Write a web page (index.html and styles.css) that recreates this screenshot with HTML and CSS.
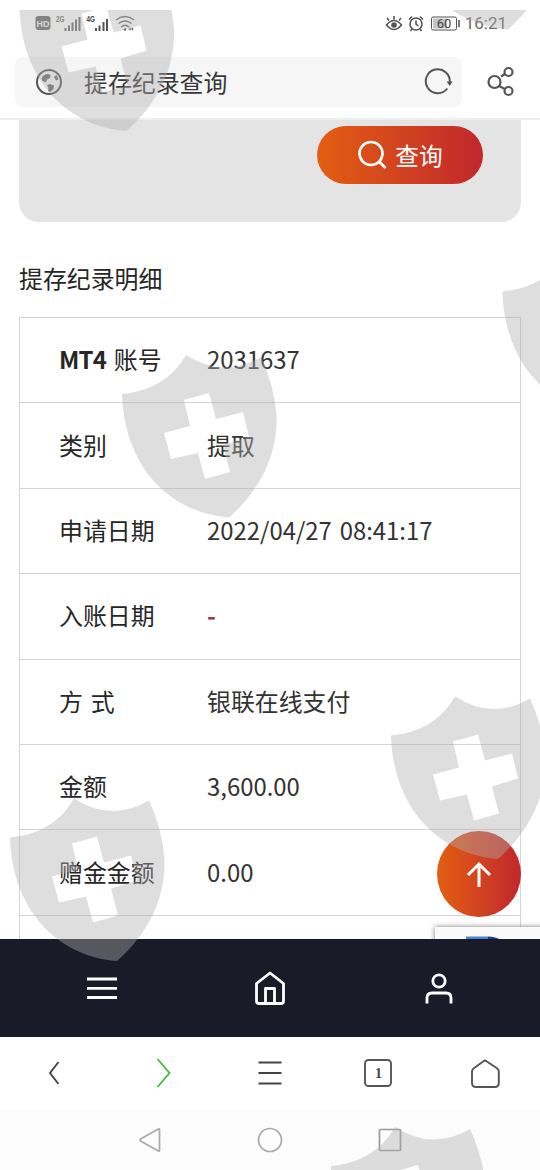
FILE: index.html
```html
<!DOCTYPE html>
<html lang="zh-CN">
<head>
<meta charset="utf-8">
<title>提存纪录查询</title>
<link rel="stylesheet" href="styles.css">
</head>
<body>
<div class="phone">
  <header class="top">
    <div class="status">
      <div class="status-left">
        <svg width="106" height="24" viewBox="0 0 106 24">
          <rect x="1.500" y="5" width="15" height="14" rx="3" fill="#666"/>
          <text x="9" y="15.500" class="hd" text-anchor="middle">HD</text>
          <text x="22" y="11" class="net" textLength="8.500" lengthAdjust="spacingAndGlyphs">2G</text>
          <g fill="#666"><rect x="30.500" y="17" width="2" height="3"/><rect x="34" y="14.500" width="2" height="5.500"/><rect x="37.500" y="11.500" width="2" height="8.500"/><rect x="41" y="8.500" width="2" height="11.500"/><rect x="44.500" y="6" width="2" height="14"/></g>
          <text x="52.500" y="11" class="net strong" textLength="8.500" lengthAdjust="spacingAndGlyphs">4G</text>
          <g fill="#555"><rect x="61" y="17" width="2" height="3"/><rect x="64.500" y="14.500" width="2" height="5.500"/><rect x="68.500" y="11" width="2" height="9"/><rect x="72" y="8" width="2" height="12"/></g>
          <g fill="none" stroke="#666" stroke-width="1.500"><path d="M82 9q9-7 18 0M84.500 12.500q6.500-5 13 0M87 16q4-3.500 8 0"/></g>
          <circle cx="91" cy="18.500" r="1.300" fill="#666"/><path d="M94.500 18h5M96 16.500v3M98.500 16.500v3" stroke="#777"/>
        </svg>
      </div>
      <div class="status-right">
        <svg width="80" height="24" viewBox="0 0 80 24">
          <g fill="none" stroke="#555" stroke-width="1.600">
            <path d="M1.500 14q7.500-9 15 0q-7.500 9-15 0ZM9 8.500V5M4 9.500L2 7M14 9.500l2-2.500"/>
            <circle cx="31" cy="13" r="6"/><path d="M31 9.500V13l2.500 2M24 8.500l3-3M35 5.500l3 3M27 18l-1.500 2M35 18l1.500 2"/>
            <rect x="46.500" y="6" width="25" height="13" rx="1.500" stroke-width="1"/><path d="M74 9v7"/>
          </g>
          <rect x="48" y="7.500" width="14" height="10" fill="#c4c4c4"/><circle cx="9" cy="14" r="2.800" fill="#555"/>
          <text x="59" y="17" class="battery" text-anchor="middle">60</text>
        </svg>
        <span>16:21</span>
      </div>
    </div>
    <div class="address-row">
      <div class="address">
        <svg width="28" height="28" viewBox="0 0 28 28"><circle cx="14" cy="14" r="12" fill="none" stroke="#555" stroke-width="2"/><path d="M6.500 10.500q2-4.500 6.500-4.500l2.500 1-.5 3-3 1.500-1 3-3.500-1.500ZM12 17l3-1 4 1.500-.5 3.500-3.500 3-2-1 .5-3ZM19 9l2.500-2 2 4.500-2.500 1Z" fill="#666"/></svg>
        <span class="address-text">提存纪录查询</span>
        <svg width="30" height="28" viewBox="0 0 30 28"><path d="M23.300 20.500A12 12 0 1 1 25.700 14.500" fill="none" stroke="#555" stroke-width="2"/><path d="M22.500 13.500h6l-2.700 4.500Z" fill="#555"/></svg>
      </div>
      <svg class="share" width="30" height="32" viewBox="0 0 30 32"><g fill="none" stroke="#555" stroke-width="2.200"><circle cx="8.500" cy="16" r="6"/><circle cx="22.500" cy="6" r="4"/><circle cx="22.500" cy="25" r="4"/><path d="M15 10.500l4-2.500M13 20l6 3"/></g></svg>
    </div>
  </header>

  <main class="content">
    <section class="search-card">
      <button class="query"><svg width="30" height="30" viewBox="0 0 30 30"><g fill="none" stroke="#fff" stroke-width="2.600"><circle cx="14" cy="13.500" r="11.500"/><path d="M22.500 22l6 6"/></g></svg><span>查询</span></button>
    </section>
    <h1 class="title">提存纪录明细</h1>
    <dl class="records">
      <div class="row"><dt><b>MT4</b> 账号</dt><dd>2031637</dd></div>
      <div class="row"><dt>类别</dt><dd>提取</dd></div>
      <div class="row"><dt>申请日期</dt><dd>2022/04/27 08:41:17</dd></div>
      <div class="row"><dt>入账日期</dt><dd class="empty">-</dd></div>
      <div class="row"><dt>方 式</dt><dd>银联在线支付</dd></div>
      <div class="row"><dt>金额</dt><dd>3,600.00</dd></div>
      <div class="row"><dt>赠金金额</dt><dd>0.00</dd></div>
      <div class="row"></div>
    </dl>
    <div class="to-top"><svg width="28" height="28" viewBox="0 0 28 28"><path d="M14 27V4M3 15L14 4l11 11" fill="none" stroke="#fff" stroke-width="3"/></svg></div>
    <div class="captcha"><svg width="40" height="4" viewBox="0 0 40 4"><path d="M2 4V1.500H24V4Z" fill="#4a80d8"/><path d="M24 1.500Q31 1.500 35 4H24Z" fill="#1c3a99"/></svg></div>
  </main>

  <nav class="site-nav">
    <svg width="34" height="36" viewBox="0 0 34 36"><path d="M2 9h30M2 18.300h30M2 27.500h30" stroke="#fff" stroke-width="2.800"/></svg>
    <svg width="34" height="36" viewBox="0 0 34 36"><g fill="none" stroke="#fff" stroke-width="2.800" stroke-linejoin="round"><path d="M3.500 13.500L17 3 30.500 13.500V31q0 2.500-2.500 2.500H6q-2.500 0-2.500-2.500Z"/><path d="M12.500 33V18.500h9V33"/></g></svg>
    <svg width="34" height="36" viewBox="0 0 34 36"><g fill="none" stroke="#fff" stroke-width="2.800"><circle cx="17" cy="11" r="6.200"/><path d="M5 33.500V28q0-5 5-5h14q5 0 5 5v5.500"/></g></svg>
  </nav>
  <nav class="browser-nav">
    <svg width="32" height="32" viewBox="0 0 32 32"><path d="M20.500 5L12 16l8.500 11" fill="none" stroke="#444" stroke-width="1.900"/></svg>
    <svg width="32" height="32" viewBox="0 0 32 32"><path d="M11.500 2L23.500 16 11.500 30" fill="none" stroke="#45bd3b" stroke-width="1.900"/></svg>
    <svg width="32" height="32" viewBox="0 0 32 32"><path d="M4.500 5.500h23M4.500 16h23M4.500 26.500h23" stroke="#444" stroke-width="1.900"/></svg>
    <svg width="32" height="32" viewBox="0 0 32 32"><rect x="3" y="3" width="26" height="26" rx="3.500" fill="none" stroke="#555" stroke-width="1.900"/><text x="16.500" y="20.500" class="tabs" text-anchor="middle">1</text></svg>
    <svg width="32" height="32" viewBox="0 0 32 32"><path d="M13.500 4.200q1.500-1.200 3 0l10.500 7q1.800 1.300 1.800 3.300V26q0 4-4 4H6q-4 0-4-4V14.500q0-2 1.800-3.300Z" fill="none" stroke="#555" stroke-width="1.900"/></svg>
  </nav>
  <footer class="system-nav">
    <svg width="30" height="30" viewBox="0 0 30 30"><path d="M24.500 4.500V25.500Q24.500 26.500 23.500 26L5.500 16Q4.500 15 5.500 14L23.500 4Q24.500 3.500 24.500 4.500Z" fill="none" stroke="#aaa" stroke-width="1.700"/></svg>
    <svg width="30" height="30" viewBox="0 0 30 30"><circle cx="15" cy="15" r="11.500" fill="none" stroke="#aaa" stroke-width="1.700"/></svg>
    <svg width="30" height="30" viewBox="0 0 30 30"><rect x="4.500" y="4.500" width="21" height="21" rx="1" fill="none" stroke="#9a9a9a" stroke-width="1.700"/></svg>
  </footer>

  <svg class="watermark" width="540" height="1160" viewBox="0 10 540 1160">
    <defs>
      <path id="shield" fill-rule="evenodd" d="M0 0Q44-4 64-39Q101-15 139-37Q152-9 154.500 21C156 62 137 97 107 123.500C48 119 2 73 0 0ZM62 6L87-1 94 25 121 18 127 43 101 51 108 78 83 85 76 59 49 65 42 39 68 32Z"/>
    </defs>
    <g fill="#b0b0b0" fill-opacity="0.410">
      <use href="#shield" x="19.500" y="7.500"/>
      <use href="#shield" x="401" y="-94"/>
      <use href="#shield" x="502.500" y="291.500"/>
      <use href="#shield" x="122" y="394"/>
      <use href="#shield" x="391" y="735.500"/>
      <use href="#shield" x="10" y="837.500"/>
      <use href="#shield" x="331" y="1166"/>
    </g>
  </svg>
</div>
</body>
</html>
```
FILE: styles.css
```css
* { box-sizing: border-box; }
body { margin: 0; background: #fff; color: #262626; font: 24px/36px "Noto Sans CJK SC", sans-serif; }
svg { display: block; flex: none; }
.phone { position: relative; width: 540px; height: 1170px; display: flex; flex-direction: column; overflow: hidden; }
.top { height: 120px; border-bottom: 2px solid #f0f0f0; }
.status { height: 46px; padding: 0 33px 0 34px; display: flex; align-items: center; justify-content: space-between; }
.status-right { display: flex; align-items: center; color: #666; font: 17px/24px Roboto, sans-serif; }
.hd { font: bold 9px "Liberation Sans", sans-serif; fill: #eee; }
.net { font: bold 9px "Liberation Sans", sans-serif; fill: #666; }
.strong { fill: #444; }
.battery { font: 13px Roboto, sans-serif; fill: #444; }
.address-row { display: flex; align-items: center; margin-top: 11px; padding-left: 15px; }
.address { width: 447px; height: 50px; padding: 0 8px 0 20px; border-radius: 8px; background: #f6f6f6; display: flex; align-items: center; }
.address-text { flex: 1; margin-left: 21px; color: #383838; font-size: 23.900px; }
.share { margin-left: 24px; }
.content { position: relative; height: 819px; padding: 0 19px; overflow: hidden; }
.search-card { height: 102px; padding: 6px 38px 0; border-radius: 0 0 20px 20px; background: #e4e4e4; display: flex; justify-content: flex-end; }
.query { width: 166px; height: 58px; padding: 0; border: 0; border-radius: 30px; background: linear-gradient(90deg, #e35f12, #c1272d); color: #fff; font: inherit; font-size: 23.700px; display: flex; align-items: center; justify-content: center; gap: 8px; }
.query span { margin-top: -1px; }
.title { margin: 38px 0 21px; font-size: 23.900px; line-height: 36px; font-weight: 400; }
.records { margin: 0; border: 1px solid #d4d4d4; }
.row { height: 85.400px; padding: 0 0 2px 39px; border-bottom: 1px solid #d4d4d4; display: flex; align-items: center; }
dt { width: 148px; font-size: 23.900px; font-weight: 400; word-spacing: 2.500px; }
dt b { letter-spacing: -0.800px; }
dd { margin: 0; color: #333; font-size: 23.900px; word-spacing: 2.500px; }
.empty { color: #a33; font-weight: bold; }
.to-top { position: absolute; left: 437px; top: 711px; width: 84px; height: 86px; border-radius: 50%; background: linear-gradient(90deg, #e35f12, #c1272d); display: grid; place-items: center; }
.captcha { position: absolute; left: 435px; top: 807px; width: 120px; height: 60px; padding: 8px 0 0 29px; background: #fafafa; box-shadow: 0 0 5px #777; }
.site-nav { height: 98px; background: #1a1b29; display: grid; grid-template-columns: repeat(3, 168.500px); justify-content: center; place-items: center; }
.browser-nav { height: 72px; display: grid; grid-template-columns: repeat(5, 108px); place-items: center; }
.tabs { font: bold 14px "Liberation Serif", serif; fill: #444; }
.system-nav { flex: 1; background: #fcfcfc; display: grid; grid-template-columns: repeat(3, 120px); justify-content: center; place-items: center; }
.watermark { position: absolute; left: 0; top: 10px; pointer-events: none; }
```
